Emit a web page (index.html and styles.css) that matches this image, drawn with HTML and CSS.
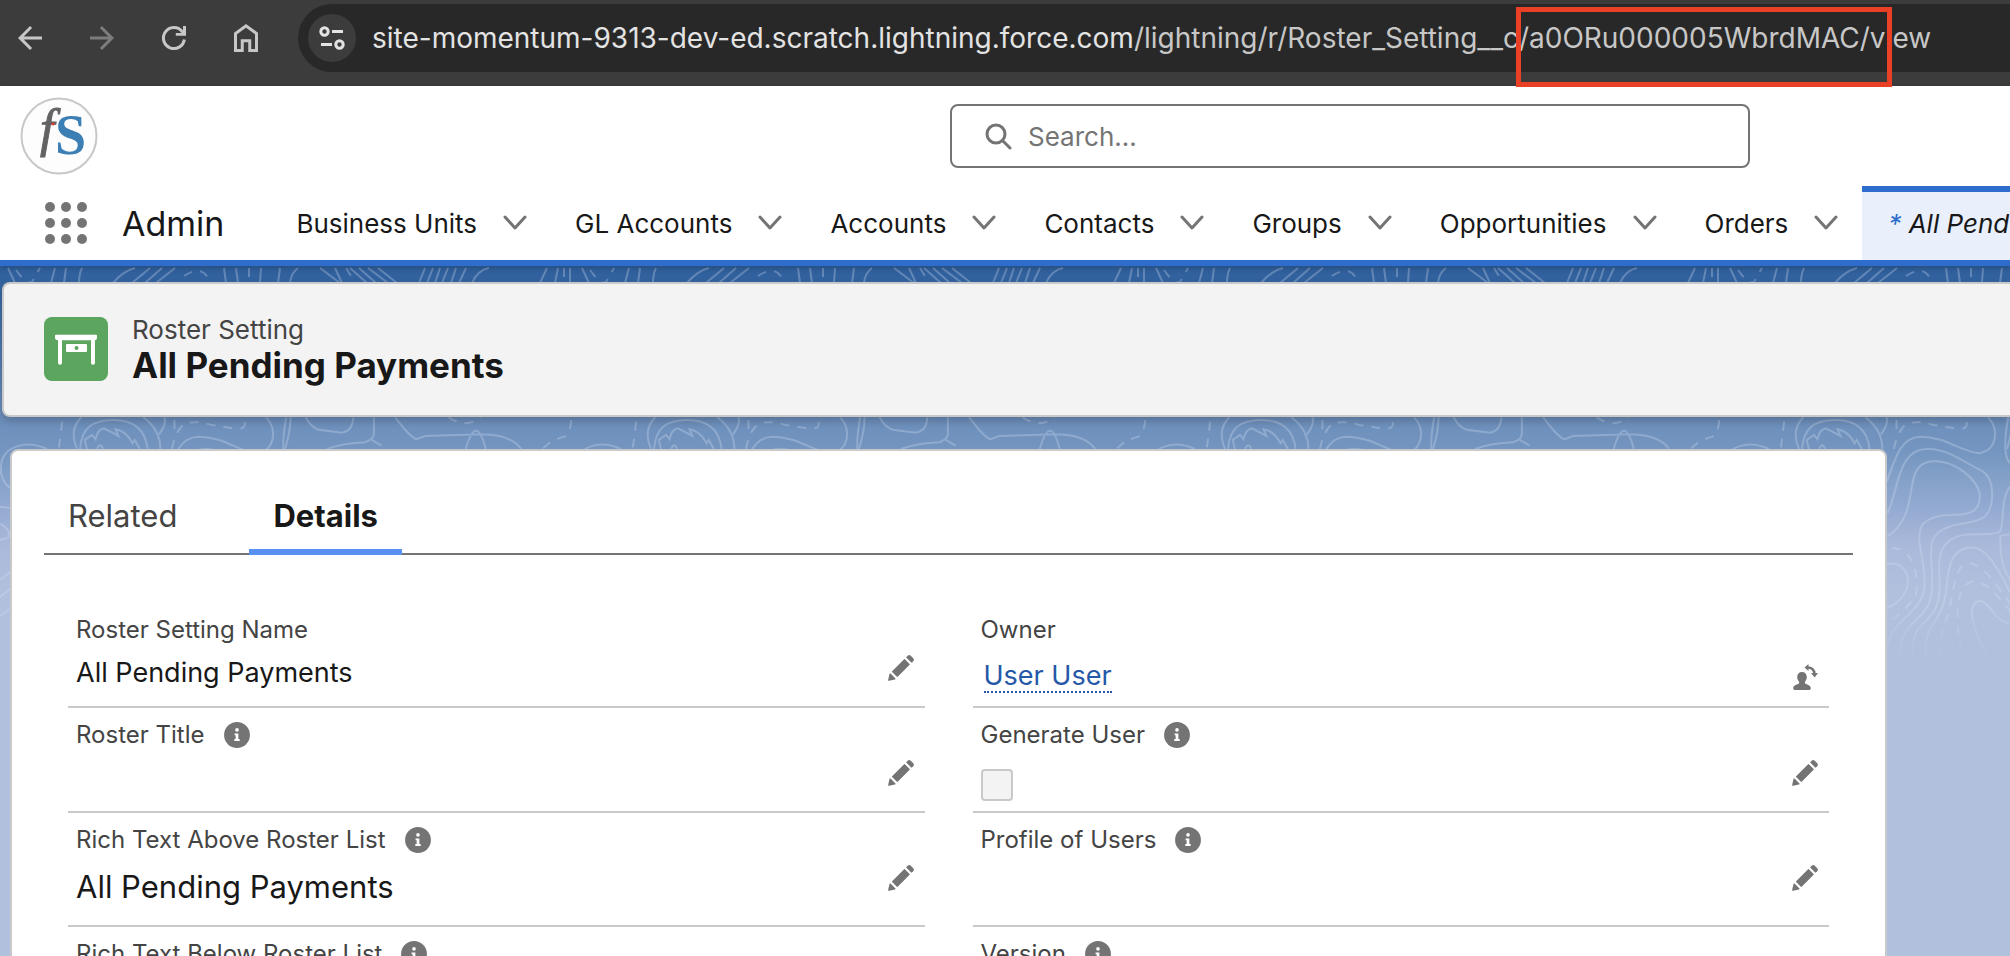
FILE: index.html
```html
<!DOCTYPE html>
<html lang="en">
<head>
    <meta charset="UTF-8">
    <meta name="viewport" content="width=device-width, initial-scale=1.0">
    <title>All Pending Payments | Roster Setting</title>
    <link rel="stylesheet" href="styles.css">
</head>
<body>
<!-- Shared icons -->
<svg class="sprite" aria-hidden="true">
    <symbol id="chevron" viewBox="0 0 24 16">
        <path d="M2 2l10 11L22 2" fill="none" stroke="currentColor" stroke-width="3" stroke-linecap="round" stroke-linejoin="round"/>
    </symbol>
    <symbol id="pencil" viewBox="0 0 52 52">
        <path fill="currentColor" d="M9.5 33.4l8.9 8.9c.4.4 1 .4 1.4 0L42 20c.4-.4.4-1 0-1.4l-8.8-8.8c-.4-.4-1-.4-1.4 0L9.5 32.1c-.4.4-.4 1 0 1.3zM36.1 5.7c-.4.4-.4 1 0 1.4l8.8 8.8c.4.4 1 .4 1.4 0l2.5-2.5c1.6-1.5 1.6-3.9 0-5.5l-4.7-4.7c-1.6-1.6-4.1-1.6-5.7 0l-2.3 2.5zM2.1 48.2c-.2 1 .7 1.9 1.7 1.7l10.9-2.6c.4-.1.7-.3.9-.5l.2-.2c.2-.2.3-.9-.1-1.3l-9-9c-.4-.4-1.1-.3-1.3-.1l-.2.2c-.3.3-.4.6-.5.9L2.1 48.2z"/>
    </symbol>
    <symbol id="info" viewBox="0 0 52 52">
        <circle cx="26" cy="26" r="24" fill="currentColor"/>
        <circle cx="26" cy="16.5" r="3.4" fill="#fff"/>
        <path d="M21.5 23h7v10.500h2.500V37H21v-3.500h2.500V26.500h-2z" fill="#fff"/>
    </symbol>
</svg>

<div class="browser-bar">
    <button class="browser-btn" aria-label="Back">
        <svg viewBox="0 0 24 24"><path fill="currentColor" d="M20 11H7.830l5.590-5.590L12 4l-8 8 8 8 1.410-1.410L7.830 13H20z"/></svg>
    </button>
    <button class="browser-btn dim" aria-label="Forward">
        <svg viewBox="0 0 24 24"><path fill="currentColor" d="M4 11h12.170l-5.590-5.590L12 4l8 8-8 8-1.410-1.410L16.170 13H4z"/></svg>
    </button>
    <button class="browser-btn" aria-label="Reload">
        <svg viewBox="0 0 24 24">
            <path d="M18.900 13a7 7 0 1 1-1.600-5.500L19 9.500" fill="none" stroke="currentColor" stroke-width="2"/>
            <path d="M18 4h2v6.500h-6.800V8.700H17L18 8z" fill="currentColor"/>
        </svg>
    </button>
    <button class="browser-btn" aria-label="Home">
        <svg viewBox="0 0 24 24"><path d="M5 20.300V9l7-5.100L19 9v11.300h-4.500v-6.500h-5v6.500z" fill="none" stroke="currentColor" stroke-width="2"/></svg>
    </button>
    <div class="omnibox">
        <button class="site-info" aria-label="View site information">
            <svg viewBox="0 0 48 48" fill="none" stroke="currentColor" stroke-width="3">
                <circle cx="16.500" cy="17.500" r="3.700"/><path d="M24 17.500h11"/>
                <path d="M13 30.500h11"/><circle cx="31.500" cy="30.500" r="3.700"/>
            </svg>
        </button>
        <div class="url">site-momentum-9313-dev-ed.scratch.lightning.force.com<span class="path">/lightning/r/Roster_Setting__c/a0ORu000005WbrdMAC/view</span></div>
    </div>
    <div class="highlight"></div>
</div>

<header class="header">
    <div class="logo-row">
        <svg class="logo" viewBox="0 0 78 78" role="img" aria-label="Logo">
            <circle cx="39" cy="39" r="37.500" fill="#fdfdfd" stroke="#c8c8c6" stroke-width="2"/>
            <text class="logo-f" x="20" y="49">f</text>
            <text class="logo-s" x="35" y="57">S</text>
            <circle cx="33" cy="27" r="1.500" fill="#e23b30"/>
        </svg>
        <label class="search">
            <svg viewBox="0 0 28 28" fill="none" stroke="currentColor" stroke-width="3" stroke-linecap="round">
                <circle cx="12" cy="12" r="9"/><path d="M19 19l7 7"/>
            </svg>
            <input type="search" placeholder="Search..." aria-label="Search">
        </label>
    </div>
    <nav class="nav">
        <button class="waffle" aria-label="App Launcher">
            <svg viewBox="0 0 42 42" fill="currentColor">
                <circle cx="5" cy="5" r="5"/><circle cx="21" cy="5" r="5"/><circle cx="37" cy="5" r="5"/>
                <circle cx="5" cy="21" r="5"/><circle cx="21" cy="21" r="5"/><circle cx="37" cy="21" r="5"/>
                <circle cx="5" cy="37" r="5"/><circle cx="21" cy="37" r="5"/><circle cx="37" cy="37" r="5"/>
            </svg>
        </button>
        <span class="app-name">Admin</span>
        <div class="nav-item"><a href="#">Business Units</a><button aria-label="Business Units list"><svg><use href="#chevron"/></svg></button></div>
        <div class="nav-item"><a href="#">GL Accounts</a><button aria-label="GL Accounts list"><svg><use href="#chevron"/></svg></button></div>
        <div class="nav-item"><a href="#">Accounts</a><button aria-label="Accounts list"><svg><use href="#chevron"/></svg></button></div>
        <div class="nav-item"><a href="#">Contacts</a><button aria-label="Contacts list"><svg><use href="#chevron"/></svg></button></div>
        <div class="nav-item"><a href="#">Groups</a><button aria-label="Groups list"><svg><use href="#chevron"/></svg></button></div>
        <div class="nav-item"><a href="#">Opportunities</a><button aria-label="Opportunities list"><svg><use href="#chevron"/></svg></button></div>
        <div class="nav-item"><a href="#">Orders</a><button aria-label="Orders list"><svg><use href="#chevron"/></svg></button></div>
        <a class="nav-tab" href="#"><span class="star">*</span> All Pending Payments</a>
    </nav>
</header>

<main class="page">
    <!-- Contour line backdrop -->
    <svg class="contours" aria-hidden="true">
        <defs>
            <linearGradient id="fade" x1="0" y1="0" x2="0" y2="1">
                <stop offset="0.850" stop-color="#fff"/>
                <stop offset="1" stop-color="#fff" stop-opacity="0"/>
            </linearGradient>
            <mask id="fade-mask"><rect width="100%" height="400" fill="url(#fade)"/></mask>
            <pattern id="topo" width="574" height="400" patternUnits="userSpaceOnUse">
                <g class="line">
                    <path d="M8 2l7 15M55 2l-4 15M66 2l-2 15M82 2q-3 6-3 15M135 2q-12 3-22 15M150 2l-18 15M162 2l-17 15M175 2l-19 15M224 2l2 15M236 2l2 15M261 2l-1 15M280 2l-2 15M298 2q-7 5-8 15M320 2l20 15M335 2l7 15M350 2l17 15M359 2l17 15M368 2l20 15M378 2l19 15M425 2l-6 15M433 2l-6 15M440 2l-5 15M448 2l-6 15M456 2l-5 15M466 2l-7 15M489 2q-11 2-17 15M547 2l-7 15M558 2l-3 15M570 2v15"/>
                    <path d="M47 183Q25 173 8 185C-1 193-3 212 10 222M0 241q6 0 10 1M0 258q12 6 8 14l-8 2M0 314l10-8M0 331l10-8M0 350l10-7"/>
                    <path class="dash" d="M16 4l10 13 6-1 8-14M184 10q12-8 20-3l9 10M249 2v15M346 2l5 8M564 2v15"/>
                </g>
                <g class="line" transform="translate(28 134) scale(.427 .333)">
                    <path d="M125 52Q95 90 115 147M270 52Q310 90 310 147M320 52q5 20-13 51M122 147C125 85 150 60 200 60S275 90 280 147M138 147l-5-27 17-15 8 13q5-30 20-33l34 23-7-20q25 5 40 42l5-10 12 27M162 147q7-22 14 0"/>
                    <path d="M615 52q0 40-13 95M650 52q15 35 35 38l50 8q25-5 27-46M810 52v50q0 15-20 25-50 2-90 20M805 120l23 17M860 52q35 60 50 66l20-10 130-5q70 0 95 44M1025 147q25-110 47 0"/>
                    <path class="dash" d="M80 65l-8 82M343 60v30M337 147q10-60 30-75 25-12 63 3l60 12q30-3 10-35M985 52q40 35 75 0M1272 60q0 30-15 50-32 10-52 37"/>
                </g>
                <g class="line" transform="translate(158 134) scale(.333)">
                    <path d="M20 245C45 180 60 112 120 110C200 110 250 160 300 160C350 150 360 90 325 52"/>
                    <path d="M22 340C55 280 50 148 140 147C200 145 240 180 310 215C345 240 345 320 315 350C280 375 250 365 210 380C150 400 150 430 155 500C165 640 130 630 85 685Q60 710 62 770"/>
                    <path d="M22 410C130 340 60 200 150 185C220 175 300 240 300 290C300 360 220 340 180 348C120 360 110 390 122 450C150 590 130 600 70 660Q25 700 22 740"/>
                    <path d="M390 260C360 300 375 370 360 395C340 408 300 400 250 405C180 420 175 470 178 520C185 630 160 640 120 680Q95 710 98 775"/>
                    <path d="M395 585C350 500 320 443 275 443C215 443 205 500 200 560C195 620 180 640 150 690Q130 730 140 778"/>
                    <path d="M395 674C340 665 330 603 297 603C260 615 275 680 325 778M390 403l-28 5q-5 90 32 135M385 52q-20 110 5 138M20 492C100 480 110 590 20 625"/>
                    <path class="dash" d="M395 615C350 560 310 488 265 490C215 500 225 590 195 670Q180 720 180 770M395 640C350 580 310 540 275 545C230 560 230 640 235 690L245 770M35 445C110 440 120 560 105 590Q80 630 22 670"/>
                </g>
            </pattern>
        </defs>
        <rect width="100%" height="400" fill="url(#topo)" mask="url(#fade-mask)"/>
    </svg>

    <section class="page-header">
        <svg class="entity-icon" viewBox="0 0 64 64" aria-hidden="true">
            <rect width="64" height="64" rx="8" fill="#5ba55e"/>
            <path d="M12 17.700h40q1 0 1 1v2q0 2.300-2 2.600v22.700q0 1.700-2 1.700t-2-1.700V23.300H18v22.700q0 1.700-2 1.700t-2-1.700V23.300q-3-.3-3-2.600v-2q0-1 1-1z" fill="#fff"/>
            <rect x="22" y="27" width="21" height="8" rx="1" fill="#fff"/>
            <circle cx="32.500" cy="31" r="2" fill="#5ba55e"/>
        </svg>
        <div>
            <p class="entity">Roster Setting</p>
            <h1>All Pending Payments</h1>
        </div>
    </section>

    <section class="card">
        <div class="tabs" role="tablist">
            <button class="tab" role="tab">Related</button>
            <button class="tab active" role="tab" aria-selected="true">Details</button>
        </div>
        <div class="fields">
            <div class="field">
                <div class="label">Roster Setting Name</div>
                <div class="value">All Pending Payments</div>
                <button class="edit" aria-label="Edit Roster Setting Name"><svg><use href="#pencil"/></svg></button>
            </div>
            <div class="field">
                <div class="label">Owner</div>
                <div class="value owner"><a href="#">User User</a></div>
                <button class="edit change-owner" aria-label="Change Owner">
                    <svg viewBox="0 0 28 28">
                        <path fill="currentColor" d="M11 9c3 0 4.800 2 4.800 5 0 2-.8 3.500-1.900 4.700v1.500c1 1.200 5.900 1.500 5.900 5 0 1.200-.8 1.800-2 1.800H4.200c-1.200 0-2-.6-2-1.800 0-3.500 4.900-3.800 5.900-5v-1.500C7 17.500 6.200 16 6.200 14c0-3 1.800-5 4.800-5z"/>
                        <path d="M16.500 4.500q6.500 0 7 6.500" fill="none" stroke="currentColor" stroke-width="2.500"/>
                        <path d="M13.500 4.500L17.500 1v7zM20 10h7l-3.300 4.500z" fill="currentColor"/>
                    </svg>
                </button>
            </div>
            <div class="field">
                <div class="label">Roster Title <svg class="info"><use href="#info"/></svg></div>
                <button class="edit" aria-label="Edit Roster Title"><svg><use href="#pencil"/></svg></button>
            </div>
            <div class="field">
                <label class="label" for="generate-user">Generate User <svg class="info"><use href="#info"/></svg></label>
                <input class="check" type="checkbox" id="generate-user" disabled>
                <button class="edit" aria-label="Edit Generate User"><svg><use href="#pencil"/></svg></button>
            </div>
            <div class="field">
                <div class="label">Rich Text Above Roster List <svg class="info"><use href="#info"/></svg></div>
                <div class="value rich">All Pending Payments</div>
                <button class="edit" aria-label="Edit Rich Text Above Roster List"><svg><use href="#pencil"/></svg></button>
            </div>
            <div class="field">
                <div class="label">Profile of Users <svg class="info"><use href="#info"/></svg></div>
                <button class="edit" aria-label="Edit Profile of Users"><svg><use href="#pencil"/></svg></button>
            </div>
            <div class="field">
                <div class="label">Rich Text Below Roster List <svg class="info"><use href="#info"/></svg></div>
            </div>
            <div class="field">
                <div class="label">Version <svg class="info"><use href="#info"/></svg></div>
            </div>
        </div>
    </section>
</main>
</body>
</html>
```
FILE: styles.css
```css
* {
    box-sizing: border-box;
}

body {
    margin: 0;
    height: 100vh;
    overflow: hidden;
    display: flex;
    flex-direction: column;
    font-family: Inter, "Liberation Sans", sans-serif;
    font-size: 26px;
    color: #181818;
    background: #b1c1dd;
}

button {
    padding: 0;
    border: none;
    background: none;
    font: inherit;
    color: inherit;
    cursor: pointer;
}

svg {
    display: block;
}

a {
    color: inherit;
    text-decoration: none;
}

.sprite {
    position: absolute;
    width: 0;
    height: 0;
}

/* Browser bar */
.browser-bar {
    position: relative;
    flex: none;
    display: flex;
    align-items: center;
    gap: 36px;
    height: 86px;
    padding: 0 0 10px 12px;
    background: #3c3c3c;
    color: #c7c7c7;
}

.browser-btn,
.browser-btn svg {
    flex: none;
    width: 36px;
    height: 36px;
}

.browser-btn.dim {
    color: #7c7c7c;
}

.omnibox {
    flex: 1;
    min-width: 0;
    display: flex;
    align-items: center;
    gap: 16px;
    height: 68px;
    margin-left: -2px;
    padding-left: 10px;
    border-radius: 34px 0 0 34px;
    background: #282828;
}

.site-info {
    flex: none;
    border-radius: 50%;
    background: #3c3c3c;
    color: #e3e3e3;
}

.site-info svg {
    width: 48px;
    height: 48px;
}

.url {
    font-size: 28px;
    white-space: nowrap;
    color: #e3e3e3;
}

.url .path {
    color: #c7c7c7;
}

/* Marker over the record id in the address */
.highlight {
    position: absolute;
    top: 7px;
    left: 1516px;
    width: 376px;
    height: 80px;
    border: 5px solid #ea4025;
    z-index: 2;
}

/* App header */
.header {
    position: relative;
    flex: none;
    background: #fff;
    border-bottom: 6px solid #2e6dcb;
    box-shadow: 0 2px 6px rgba(0, 0, 0, 0.2);
    z-index: 1;
}

.logo-row {
    display: grid;
    grid-template-columns: minmax(0, 1fr) 800px 260px;
    align-items: center;
    height: 100px;
    padding-left: 20px;
}

.logo {
    width: 78px;
    height: 78px;
}

.logo-f {
    font: italic 52px "Liberation Serif", serif;
    fill: #636363;
    stroke: #636363;
    stroke-width: 1;
}

.logo-s {
    font: bold 56px "Liberation Serif", serif;
    fill: #3c7fb5;
}

.search {
    display: flex;
    align-items: center;
    gap: 16px;
    height: 64px;
    padding: 0 32px;
    border: 2px solid #747474;
    border-radius: 8px;
    color: #747474;
}

.search svg {
    flex: none;
    width: 28px;
    height: 28px;
}

.search input {
    flex: 1;
    min-width: 0;
    padding: 0;
    border: none;
    outline: none;
    font: inherit;
}

.search input::placeholder {
    color: #747474;
    opacity: 1;
}

.nav {
    display: flex;
    align-items: center;
    height: 74px;
    padding-left: 45px;
    white-space: nowrap;
    overflow: hidden;
}

.waffle {
    flex: none;
    margin-right: 35px;
    color: #747474;
}

.waffle svg {
    width: 42px;
    height: 42px;
}

.app-name {
    margin-right: 48px;
    font-size: 34px;
}

.nav-item {
    flex: none;
    display: flex;
    align-items: center;
    gap: 26px;
    padding: 0 24px;
}

.nav-item svg {
    width: 24px;
    height: 16px;
    color: #747474;
}

.nav-tab {
    flex: none;
    align-self: stretch;
    padding: 0 26px;
    border-top: 6px solid #2e6dcb;
    background: #e9f0fb;
    font-style: italic;
    line-height: 64px;
}

.star {
    color: #2e6dcb;
}

/* Page */
.page {
    position: relative;
    flex: 1;
    min-height: 0;
    overflow: hidden;
    background: linear-gradient(#2f5f9c 0, #33639f 16px, #6c8ebb 150px, #7395bf 184px, #86a2c9 216px, #90a8d0 236px, #aab9da 280px, #b1c1dd 330px);
}

.contours {
    position: absolute;
    top: 0;
    left: 0;
    width: 100%;
    height: 400px;
}

.line {
    fill: none;
    stroke: rgba(215, 226, 245, 0.3);
    stroke-width: 2;
}

.line path {
    vector-effect: non-scaling-stroke;
}

.dash {
    stroke-dasharray: 9 8;
}

.page-header {
    position: relative;
    display: flex;
    align-items: center;
    gap: 24px;
    height: 135px;
    margin: 16px 0 0 2px;
    padding: 0 40px 2px;
    border: 2px solid #c9c9c9;
    border-right: none;
    border-radius: 8px 0 0 8px;
    background: #f3f3f3;
    box-shadow: 0 4px 8px rgba(0, 0, 0, 0.2);
}

.entity-icon {
    flex: none;
    width: 64px;
    height: 64px;
}

.entity {
    margin: 0;
    line-height: 32px;
    color: #444;
}

h1 {
    margin: 0;
    font-size: 35px;
    line-height: 38px;
}

.card {
    position: relative;
    min-height: 600px;
    margin: 32px 123px 0 10px;
    padding: 32px;
    border: 2px solid #c9c9c9;
    border-radius: 8px;
    background: #fff;
}

.tabs {
    display: flex;
    gap: 48px;
    border-bottom: 2px solid #747474;
}

.tab {
    height: 72px;
    margin-bottom: -2px;
    padding: 0 24px 2px;
    border-bottom: 6px solid transparent;
    font-size: 31px;
    color: #444;
}

.tab.active {
    border-bottom-color: #5790f0;
    font-weight: bold;
    color: #181818;
}

.fields {
    display: grid;
    grid-template-columns: 1fr 1fr;
    column-gap: 48px;
    padding: 48px 24px 0;
}

.field {
    position: relative;
    min-height: 105px;
    padding: 10px 8px 8px;
    border-bottom: 2px solid #c9c9c9;
}

.label {
    display: flex;
    align-items: center;
    gap: 18px;
    font-size: 24px;
    line-height: 34px;
    color: #444;
}

.info {
    width: 28px;
    height: 28px;
    color: #747474;
}

.value {
    padding-top: 10px;
    font-size: 27px;
    line-height: 32px;
}

.value.rich {
    padding-bottom: 10px;
    font-size: 31px;
    line-height: 40px;
}

.owner a {
    display: inline-block;
    margin: 4px 3px 0;
    border-bottom: 2px dotted #2558a8;
    line-height: 30px;
    color: #2558a8;
}

.check {
    appearance: none;
    display: block;
    width: 32px;
    height: 32px;
    margin: 17px 0 0;
    border: 2px solid #c9c9c9;
    border-radius: 4px;
    background: #f3f3f3;
}

/* Inline edit button sits over the right end of a field */
.edit {
    position: absolute;
    top: 51px;
    right: 10px;
    color: #747474;
}

.edit svg {
    width: 28px;
    height: 28px;
}

.change-owner {
    top: 60px;
}
```
